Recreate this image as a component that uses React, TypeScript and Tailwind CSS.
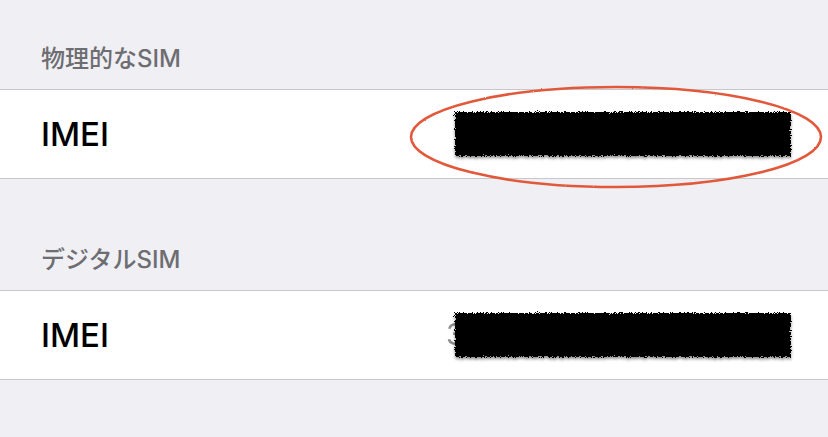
import React from 'react';

const jp = { fontFamily: 'Inter, "Noto Sans CJK JP", "Noto Sans", sans-serif' };
const latin = { fontFamily: 'Inter, "Noto Sans CJK JP", sans-serif' };

// Hand-drawn black marker stroke that hides the number
function Redaction({ id }: { id: string }) {
  return (
    <svg
      width="342"
      height="52"
      viewBox="0 0 342 52"
      className="drop-shadow-[0_2px_1.5px_rgba(0,0,0,0.45)]"
    >
      <defs>
        <filter id={id} x="-5%" y="-20%" width="110%" height="140%">
          <feTurbulence type="fractalNoise" baseFrequency="0.8 1.2" numOctaves="3" seed="4" />
          <feDisplacementMap in="SourceGraphic" scale="5" xChannelSelector="R" yChannelSelector="G" />
          <feGaussianBlur stdDeviation="0.4" />
        </filter>
      </defs>
      <rect x="3" y="4" width="336" height="44" fill="#000" filter={`url(#${id})`} />
    </svg>
  );
}

function Ellipse() {
  return (
    <svg
      width="428"
      height="110"
      viewBox="0 0 428 110"
      className="pointer-events-none absolute left-[400px] top-[-6px]"
    >
      <defs>
        <filter id="pen" x="-5%" y="-10%" width="110%" height="120%">
          <feTurbulence type="fractalNoise" baseFrequency="0.9" numOctaves="2" seed="2" />
          <feDisplacementMap in="SourceGraphic" scale="1.6" xChannelSelector="R" yChannelSelector="G" />
        </filter>
      </defs>
      <ellipse
        cx="216"
        cy="53"
        rx="205"
        ry="50"
        fill="none"
        stroke="#e2583b"
        strokeWidth="2.6"
        filter="url(#pen)"
      />
    </svg>
  );
}

function SectionHeader({ title }: { title: string }) {
  return (
    <div className="flex h-[89px] items-end px-[41px] pb-[15px]">
      <span className="text-[24px] font-medium leading-[30px] text-[#6d6d72]" style={jp}>
        {title}
      </span>
    </div>
  );
}

function ImeiRow({ id, circled, peek }: { id: string; circled?: boolean; peek?: boolean }) {
  return (
    <div className="relative flex h-[90px] items-center justify-between border-y border-[#c8c7cc] bg-white pl-[41px] pr-[34px]">
      <span className="text-[33px] font-medium leading-none text-black" style={latin}>
        IMEI
      </span>
      <div className="relative flex items-center">
        {peek && (
          <span
            className="absolute left-[-6px] top-[10px] text-[30px] leading-none text-[#8e8e93] blur-[0.6px]"
            style={latin}
          >
            3
          </span>
        )}
        <div className="relative">
          <Redaction id={id} />
        </div>
      </div>
      {circled && <Ellipse />}
    </div>
  );
}

export default function App() {
  return (
    <div className="min-h-[437px] w-full bg-[#efeff4]">
      <SectionHeader title="物理的なSIM" />
      <ImeiRow id="rough-1" circled />
      <div className="mt-[22px]">
        <SectionHeader title="デジタルSIM" />
        <ImeiRow id="rough-2" peek />
      </div>
    </div>
  );
}
